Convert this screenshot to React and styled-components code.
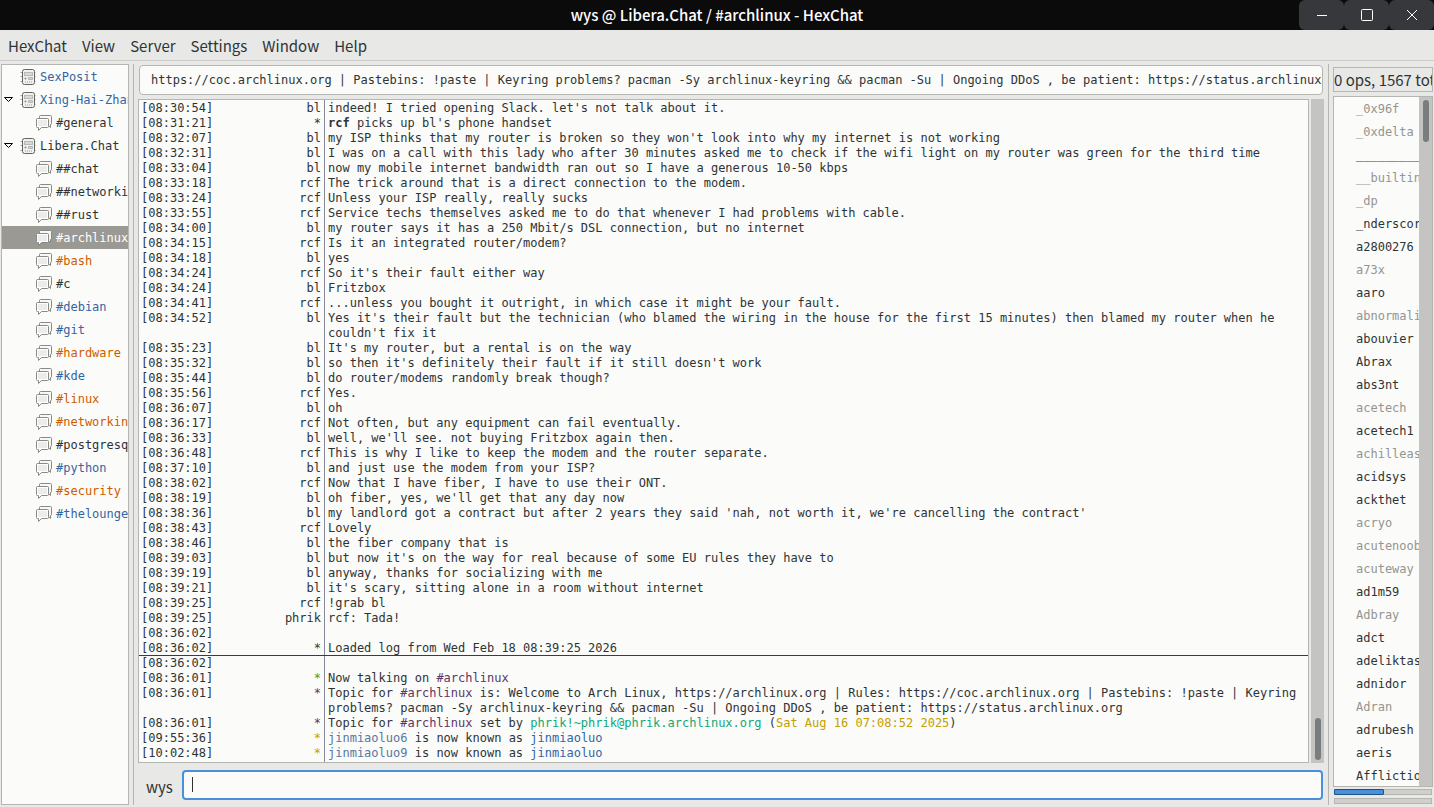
import React from "react";
import styled, { createGlobalStyle } from "styled-components";

const MONO = '"DejaVu Sans Mono", "Liberation Mono", monospace';
const SANS = '"Noto Sans CJK SC", "Noto Sans", sans-serif';

const GlobalStyle = createGlobalStyle`
  * {
    box-sizing: border-box;
  }
  body {
    margin: 0;
    background: #e8e8e6;
    color: #2e3436;
    font-family: ${SANS};
    font-size: 15px;
  }
  button, input {
    font: inherit;
    color: inherit;
  }
`;

const Window = styled.div`
  height: 100vh;
  display: flex;
  flex-direction: column;
  overflow: hidden;
`;

const TitleBar = styled.header`
  display: grid;
  grid-template-columns: 1fr auto 1fr;
  height: 30px;
  flex: none;
  background: #0b0b0b;
  color: #fff;
`;

const Title = styled.h1`
  grid-column: 2;
  margin: 0;
  font-size: 15px;
  line-height: 30px;
  font-weight: 500;
  white-space: nowrap;
`;

const WindowButtons = styled.div`
  display: flex;
  justify-content: flex-end;
`;

const WindowButton = styled.button`
  width: 45px;
  height: 30px;
  padding: 0;
  border: 0;
  border-radius: 6px;
  background: #37383c;
  color: #fff;
  display: flex;
  align-items: center;
  justify-content: center;
`;

const MenuBar = styled.nav`
  display: flex;
  flex: none;
  height: 31px;
  padding-left: 8px;
  gap: 15px;
  border-bottom: 1px solid #cccccb;
`;

const MenuItem = styled.button`
  padding: 0;
  border: 0;
  background: none;
  line-height: 32px;
`;

const Content = styled.div`
  display: flex;
  flex: 1;
  min-height: 0;
  padding: 3px 1px 2px 1px;
`;

const Separator = styled.div`
  flex: none;
  width: 1px;
  margin: 0 4px;
  background: #b5b5b2;
`;

const Tree = styled.ul`
  flex: none;
  width: 128px;
  margin: 0;
  padding: 0;
  list-style: none;
  overflow: hidden;
  border: 1px solid #b5b5b2;
  background: #fbfbf9;
  font-family: ${MONO};
  font-size: 12px;
`;

const nameColors = {
  blue: "#3465a4",
  orange: "#ce5c00",
  selected: "#ffffff",
};

const TreeButton = styled.button`
  display: flex;
  align-items: center;
  width: 100%;
  height: 23px;
  padding: 0 0 0 ${(p) => (p.$channel ? 34 : 2)}px;
  border: 0;
  white-space: nowrap;
  background: ${(p) => (p.$tone === "selected" ? "#9a9993" : "transparent")};
  color: ${(p) => nameColors[p.$tone] || "#2e3436"};
`;

const Expander = styled.span`
  display: flex;
  flex: none;
  width: 16px;
`;

const TreeIcon = styled.svg`
  flex: none;
  width: 16px;
  height: 16px;
  margin-right: 4px;
`;

const Main = styled.main`
  flex: 1;
  min-width: 0;
  display: flex;
  flex-direction: column;
`;

const TopicInput = styled.input`
  flex: none;
  height: 30px;
  margin: 1px 1px 0;
  padding: 0 0 0 11px;
  border: 1px solid #b5b5b2;
  border-radius: 4px;
  background: #fbfbf9;
  font-family: ${MONO};
  font-size: 12px;
  outline: none;
`;

const ChatArea = styled.div`
  flex: 1;
  min-height: 0;
  display: flex;
  gap: 2px;
  margin-top: 4px;
`;

const Log = styled.div`
  flex: 1;
  min-width: 0;
  display: flex;
  flex-direction: column;
  overflow: hidden;
  padding-top: 1px;
  border: 1px solid #b5b5b2;
  background: linear-gradient(#88889c, #88889c) 185px 0 / 1px 100% no-repeat #fbfbf9;
  font-family: ${MONO};
  font-size: 12px;
  line-height: 15px;
`;

const Line = styled.div`
  flex: none;
  display: grid;
  grid-template-columns: 80px 102px 1fr;
  ${(p) => p.$marker && "box-shadow: inset 0 -1px #6b2f08;"}
`;

const Stamp = styled.time`
  padding-left: 2px;
`;

const Nick = styled.span`
  text-align: right;
  color: ${(p) => p.$color || "inherit"};
`;

const Message = styled.span`
  padding: 0 4px 0 7px;
`;

const Tint = styled.span`
  color: ${(p) => p.$color};
`;

const Trough = styled.div`
  flex: none;
  display: flex;
  flex-direction: column;
  align-items: center;
  justify-content: ${(p) => (p.$atEnd ? "flex-end" : "flex-start")};
  width: 13px;
  padding: 3px 0;
  background: #c4c5c3;
`;

const Thumb = styled.div`
  width: 6px;
  height: 42px;
  border-radius: 3px;
  background: #7a7d7d;
`;

const InputRow = styled.form`
  flex: none;
  display: flex;
  align-items: flex-end;
  margin: 7px 1px 5px 8px;
  gap: 9px;
`;

const InputLabel = styled.label`
  line-height: 26px;
`;

const ChatInput = styled.input`
  flex: 1;
  min-width: 0;
  height: 30px;
  padding: 0 8px;
  border: 2px solid #4a90d9;
  border-radius: 4px;
  background: linear-gradient(#2e3436, #2e3436) 8px 5px / 1px 15px no-repeat #fbfbf9;
  caret-color: transparent;
  outline: none;
`;

const UserPane = styled.aside`
  flex: none;
  width: 100px;
  display: flex;
  flex-direction: column;
`;

const UserCount = styled.div`
  height: 25px;
  flex: none;
  margin: 3px 0 4px;
  overflow: hidden;
  border: 1px solid #b5b5b2;
  line-height: 24px;
  white-space: nowrap;
`;

const UserBox = styled.div`
  flex: 1;
  min-height: 0;
  display: flex;
  border: 1px solid #b5b5b2;
  background: #fbfbf9;
`;

const UserList = styled.ul`
  flex: 1;
  min-width: 0;
  margin: 0;
  padding: 1px 0 0 22px;
  list-style: none;
  overflow: hidden;
  font-family: ${MONO};
  font-size: 12px;
`;

const User = styled.li`
  line-height: 23px;
  white-space: nowrap;
  color: ${(p) => (p.$away ? "#939591" : "#2e3436")};
`;

const Meter = styled.div`
  flex: none;
  height: 6px;
  margin: 2px 1px 1px;
  border: 1px solid #b5b5b2;
  background: #cfcfcc;
`;

const MeterFill = styled.div`
  height: 6px;
  margin: -1px;
  border: 1px solid #1c5187;
  border-radius: 1px;
  background: #4a90d9;
`;

const tree = [
  { name: "SexPosit", server: true, tone: "blue" },
  { name: "Xing-Hai-Zhang", server: true, open: true, tone: "blue" },
  { name: "#general" },
  { name: "Libera.Chat", server: true, open: true },
  { name: "##chat" },
  { name: "##networking" },
  { name: "##rust" },
  { name: "#archlinux", tone: "selected" },
  { name: "#bash", tone: "orange" },
  { name: "#c" },
  { name: "#debian", tone: "blue" },
  { name: "#git", tone: "blue" },
  { name: "#hardware", tone: "orange" },
  { name: "#kde", tone: "blue" },
  { name: "#linux", tone: "orange" },
  { name: "#networking", tone: "orange" },
  { name: "#postgresql" },
  { name: "#python", tone: "blue" },
  { name: "#security", tone: "orange" },
  { name: "#thelounge", tone: "blue" },
];

const topic =
  "https://coc.archlinux.org | Pastebins: !paste | Keyring problems? pacman -Sy archlinux-keyring && pacman -Su | Ongoing DDoS , be patient: https://status.archlinux.org";

const channel = <Tint $color="#5c3566">#archlinux</Tint>;

const lines = [
  ["08:30:54", "bl", "indeed! I tried opening Slack. let's not talk about it."],
  ["08:31:21", "*", <><b>rcf</b> picks up bl's phone handset</>],
  ["08:32:07", "bl", "my ISP thinks that my router is broken so they won't look into why my internet is not working"],
  ["08:32:31", "bl", "I was on a call with this lady who after 30 minutes asked me to check if the wifi light on my router was green for the third time"],
  ["08:33:04", "bl", "now my mobile internet bandwidth ran out so I have a generous 10-50 kbps"],
  ["08:33:18", "rcf", "The trick around that is a direct connection to the modem."],
  ["08:33:24", "rcf", "Unless your ISP really, really sucks"],
  ["08:33:55", "rcf", "Service techs themselves asked me to do that whenever I had problems with cable."],
  ["08:34:00", "bl", "my router says it has a 250 Mbit/s DSL connection, but no internet"],
  ["08:34:15", "rcf", "Is it an integrated router/modem?"],
  ["08:34:18", "bl", "yes"],
  ["08:34:24", "rcf", "So it's their fault either way"],
  ["08:34:24", "bl", "Fritzbox"],
  ["08:34:41", "rcf", "...unless you bought it outright, in which case it might be your fault."],
  ["08:34:52", "bl", "Yes it's their fault but the technician (who blamed the wiring in the house for the first 15 minutes) then blamed my router when he couldn't fix it"],
  ["08:35:23", "bl", "It's my router, but a rental is on the way"],
  ["08:35:32", "bl", "so then it's definitely their fault if it still doesn't work"],
  ["08:35:44", "bl", "do router/modems randomly break though?"],
  ["08:35:56", "rcf", "Yes."],
  ["08:36:07", "bl", "oh"],
  ["08:36:17", "rcf", "Not often, but any equipment can fail eventually."],
  ["08:36:33", "bl", "well, we'll see. not buying Fritzbox again then."],
  ["08:36:48", "rcf", "This is why I like to keep the modem and the router separate."],
  ["08:37:10", "bl", "and just use the modem from your ISP?"],
  ["08:38:02", "rcf", "Now that I have fiber, I have to use their ONT."],
  ["08:38:19", "bl", "oh fiber, yes, we'll get that any day now"],
  ["08:38:36", "bl", "my landlord got a contract but after 2 years they said 'nah, not worth it, we're cancelling the contract'"],
  ["08:38:43", "rcf", "Lovely"],
  ["08:38:46", "bl", "the fiber company that is"],
  ["08:39:03", "bl", "but now it's on the way for real because of some EU rules they have to"],
  ["08:39:19", "bl", "anyway, thanks for socializing with me"],
  ["08:39:21", "bl", "it's scary, sitting alone in a room without internet"],
  ["08:39:25", "rcf", "!grab bl"],
  ["08:39:25", "phrik", "rcf: Tada!"],
  ["08:36:02", "", ""],
  ["08:36:02", "*", "Loaded log from Wed Feb 18 08:39:25 2026", { marker: true }],
  ["08:36:02", "", ""],
  ["08:36:01", "*", <>Now talking on {channel}</>, { color: "#4e9a06" }],
  ["08:36:01", "*", <>Topic for {channel} is: Welcome to Arch Linux, https://archlinux.org | Rules: https://coc.archlinux.org | Pastebins: !paste | Keyring problems? pacman -Sy archlinux-keyring && pacman -Su | Ongoing DDoS , be patient: https://status.archlinux.org</>, { color: "#5c3566" }],
  ["08:36:01", "*", <>Topic for {channel} set by <Tint $color="#11a879">phrik!~phrik@phrik.archlinux.org</Tint> (<Tint $color="#c4a000">Sat Aug 16 07:08:52 2025</Tint>)</>, { color: "#5c3566" }],
  ["09:55:36", "*", <><Tint $color="#58789e">jinmiaoluo6</Tint> is now known as <Tint $color="#3465a4">jinmiaoluo</Tint></>, { color: "#c4a000" }],
  ["10:02:48", "*", <><Tint $color="#58789e">jinmiaoluo9</Tint> is now known as <Tint $color="#3465a4">jinmiaoluo</Tint></>, { color: "#c4a000" }],
];

// a leading "-" marks a user who is away
const users = [
  "-_0x96f", "-_0xdelta", "____________", "-__builtin", "-_dp", "_nderscore", "a2800276",
  "-a73x", "aaro", "-abnormality", "abouvier", "Abrax", "abs3nt", "-acetech", "acetech1",
  "-achilleas", "acidsys", "ackthet", "-acryo", "-acutenoob", "-acuteway", "ad1m59",
  "-Adbray", "adct", "adeliktas", "adnidor", "-Adran", "adrubesh", "aeris", "Affliction",
];

const ServerIcon = () => (
  <TreeIcon viewBox="0 0 16 16" fill="none" aria-hidden="true">
    <path d="M.5 3.5H3M.5 7.5H3M.5 12.500H3M14 3.5h1.500M14 7.5h1.500M14 12.500h1.500" stroke="#a3a4a0" />
    <rect x="2.500" y=".5" width="12" height="15" rx="2" fill="#f1f1ef" stroke="#62645f" />
    <rect x="4.500" y="3.500" width="8" height="3" fill="#d9d9d6" stroke="#b9bab6" />
    <circle cx="5.500" cy="9.500" r="1" fill="#888a85" />
    <path d="M8.500 8.500h4v2h-4z" fill="#d3d3d0" stroke="#b5b6b2" />
    <path d="M5.500 12v2M7.500 12v2M9.500 12v2M11.500 12v2" stroke="#c5c6c2" />
  </TreeIcon>
);

const ChannelIcon = () => (
  <TreeIcon viewBox="0 0 16 16" fill="none" aria-hidden="true">
    <path d="M4.500.5h10q1 0 1 1v7q0 1-1 1v3l-3-3h-7q-1 0-1-1v-7q0-1 1-1z" fill="#f8f8f7" stroke="#888a85" />
    <path d="M1.500 3.500h10q1 0 1 1v7q0 1-1 1h-6l-3 3v-3h-1q-1 0-1-1v-7q0-1 1-1z" fill="#fff" stroke="#888a85" />
    <path d="M2 5h9v6H2z" fill="#ececec" />
  </TreeIcon>
);

const App = () => (
  <Window>
    <GlobalStyle />
    <TitleBar>
      <Title>wys @ Libera.Chat / #archlinux - HexChat</Title>
      <WindowButtons>
        <WindowButton aria-label="Minimize">
          <svg width="12" height="12" stroke="currentColor"><path d="M1 6.500h10" /></svg>
        </WindowButton>
        <WindowButton aria-label="Maximize">
          <svg width="12" height="12" fill="none" stroke="currentColor"><rect x=".5" y=".5" width="11" height="11" rx="1" /></svg>
        </WindowButton>
        <WindowButton aria-label="Close">
          <svg width="12" height="12" stroke="currentColor"><path d="M1 1l10 10M11 1L1 11" /></svg>
        </WindowButton>
      </WindowButtons>
    </TitleBar>
    <MenuBar>
      {["HexChat", "View", "Server", "Settings", "Window", "Help"].map((item) => (
        <MenuItem key={item}>{item}</MenuItem>
      ))}
    </MenuBar>
    <Content>
      <Tree>
        {tree.map(({ name, server, open, tone }) => (
          <li key={name}>
            <TreeButton $channel={!server} $tone={tone}>
              {server && (
                <Expander>
                  {open && (
                    <svg width="10" height="6" fill="none" stroke="#000"><path d="M.5.500h8l-4 4z" /></svg>
                  )}
                </Expander>
              )}
              {server ? <ServerIcon /> : <ChannelIcon />}
              {name}
            </TreeButton>
          </li>
        ))}
      </Tree>
      <Separator />
      <Main>
        <TopicInput aria-label="Topic" defaultValue={topic} />
        <ChatArea>
          <Log>
            {lines.map(([time, nick, text, opts = {}], i) => (
              <Line key={i} $marker={opts.marker}>
                <Stamp>[{time}]</Stamp>
                <Nick $color={opts.color}>{nick}</Nick>
                <Message>{text}</Message>
              </Line>
            ))}
          </Log>
          <Trough $atEnd>
            <Thumb />
          </Trough>
        </ChatArea>
        <InputRow>
          <InputLabel htmlFor="message">wys</InputLabel>
          <ChatInput id="message" autoFocus />
        </InputRow>
      </Main>
      <Separator />
      <UserPane>
        <UserCount>0 ops, 1567 total</UserCount>
        <UserBox>
          <UserList>
            {users.map((user) => (
              <User key={user} $away={user.startsWith("-")}>{user.replace("-", "")}</User>
            ))}
          </UserList>
          <Trough>
            <Thumb />
          </Trough>
        </UserBox>
        <Meter>
          <MeterFill style={{ width: "52%" }} />
        </Meter>
        <Meter />
      </UserPane>
    </Content>
  </Window>
);

export default App;
